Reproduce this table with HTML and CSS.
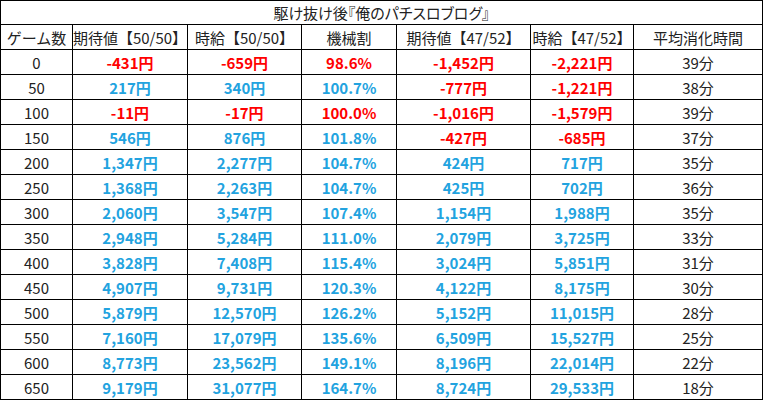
FILE: index.html
```html
<!DOCTYPE html>
<html lang="ja">
<head>
<meta charset="utf-8">
<title>駆け抜け後『俺のパチスロブログ』</title>
<link rel="stylesheet" href="styles.css">
</head>
<body>
<div class="sheet">
  <div class="cell title">駆け抜け後『俺のパチスロブログ』</div>

  <div class="cell head">ゲーム数</div>
  <div class="cell head">期待値【50/50】</div>
  <div class="cell head">時給【50/50】</div>
  <div class="cell head">機械割</div>
  <div class="cell head">期待値【47/52】</div>
  <div class="cell head">時給【47/52】</div>
  <div class="cell head">平均消化時間</div>

  <div class="cell g">0</div><div class="cell v neg">-431円</div><div class="cell v neg">-659円</div><div class="cell v neg">98.6%</div><div class="cell v neg">-1,452円</div><div class="cell v neg">-2,221円</div><div class="cell t">39分</div>
  <div class="cell g">50</div><div class="cell v pos">217円</div><div class="cell v pos">340円</div><div class="cell v pos">100.7%</div><div class="cell v neg">-777円</div><div class="cell v neg">-1,221円</div><div class="cell t">38分</div>
  <div class="cell g">100</div><div class="cell v neg">-11円</div><div class="cell v neg">-17円</div><div class="cell v neg">100.0%</div><div class="cell v neg">-1,016円</div><div class="cell v neg">-1,579円</div><div class="cell t">39分</div>
  <div class="cell g">150</div><div class="cell v pos">546円</div><div class="cell v pos">876円</div><div class="cell v pos">101.8%</div><div class="cell v neg">-427円</div><div class="cell v neg">-685円</div><div class="cell t">37分</div>
  <div class="cell g">200</div><div class="cell v pos">1,347円</div><div class="cell v pos">2,277円</div><div class="cell v pos">104.7%</div><div class="cell v pos">424円</div><div class="cell v pos">717円</div><div class="cell t">35分</div>
  <div class="cell g">250</div><div class="cell v pos">1,368円</div><div class="cell v pos">2,263円</div><div class="cell v pos">104.7%</div><div class="cell v pos">425円</div><div class="cell v pos">702円</div><div class="cell t">36分</div>
  <div class="cell g">300</div><div class="cell v pos">2,060円</div><div class="cell v pos">3,547円</div><div class="cell v pos">107.4%</div><div class="cell v pos">1,154円</div><div class="cell v pos">1,988円</div><div class="cell t">35分</div>
  <div class="cell g">350</div><div class="cell v pos">2,948円</div><div class="cell v pos">5,284円</div><div class="cell v pos">111.0%</div><div class="cell v pos">2,079円</div><div class="cell v pos">3,725円</div><div class="cell t">33分</div>
  <div class="cell g">400</div><div class="cell v pos">3,828円</div><div class="cell v pos">7,408円</div><div class="cell v pos">115.4%</div><div class="cell v pos">3,024円</div><div class="cell v pos">5,851円</div><div class="cell t">31分</div>
  <div class="cell g">450</div><div class="cell v pos">4,907円</div><div class="cell v pos">9,731円</div><div class="cell v pos">120.3%</div><div class="cell v pos">4,122円</div><div class="cell v pos">8,175円</div><div class="cell t">30分</div>
  <div class="cell g">500</div><div class="cell v pos">5,879円</div><div class="cell v pos">12,570円</div><div class="cell v pos">126.2%</div><div class="cell v pos">5,152円</div><div class="cell v pos">11,015円</div><div class="cell t">28分</div>
  <div class="cell g">550</div><div class="cell v pos">7,160円</div><div class="cell v pos">17,079円</div><div class="cell v pos">135.6%</div><div class="cell v pos">6,509円</div><div class="cell v pos">15,527円</div><div class="cell t">25分</div>
  <div class="cell g">600</div><div class="cell v pos">8,773円</div><div class="cell v pos">23,562円</div><div class="cell v pos">149.1%</div><div class="cell v pos">8,196円</div><div class="cell v pos">22,014円</div><div class="cell t">22分</div>
  <div class="cell g">650</div><div class="cell v pos">9,179円</div><div class="cell v pos">31,077円</div><div class="cell v pos">164.7%</div><div class="cell v pos">8,724円</div><div class="cell v pos">29,533円</div><div class="cell t">18分</div>
</div>
</body>
</html>
```

FILE: styles.css
```css
html, body {
  margin: 0;
  padding: 0;
  background: #ffffff;
}

.sheet {
  display: grid;
  grid-template-columns: 71px 114px 113px 94px 133px 102px 128px;
  grid-template-rows: 23px repeat(15, 24px);
  gap: 1px;
  padding: 1px;
  width: 761px;
  background: #000000;
  font-family: "Noto Sans CJK JP", "Noto Sans", sans-serif;
  font-size: 15px;
  color: #222222;
}

.cell {
  background: #ffffff;
  display: flex;
  align-items: center;
  justify-content: center;
  white-space: nowrap;
  overflow: visible;
  line-height: 1;
}

.title {
  grid-column: 1 / -1;
  font-feature-settings: "palt" 1;
}

.g, .t, .head {
  color: #222222;
}

.v {
  font-weight: 700;
}

.neg {
  color: #ff0000;
}

.pos {
  color: #22a3df;
}
```
